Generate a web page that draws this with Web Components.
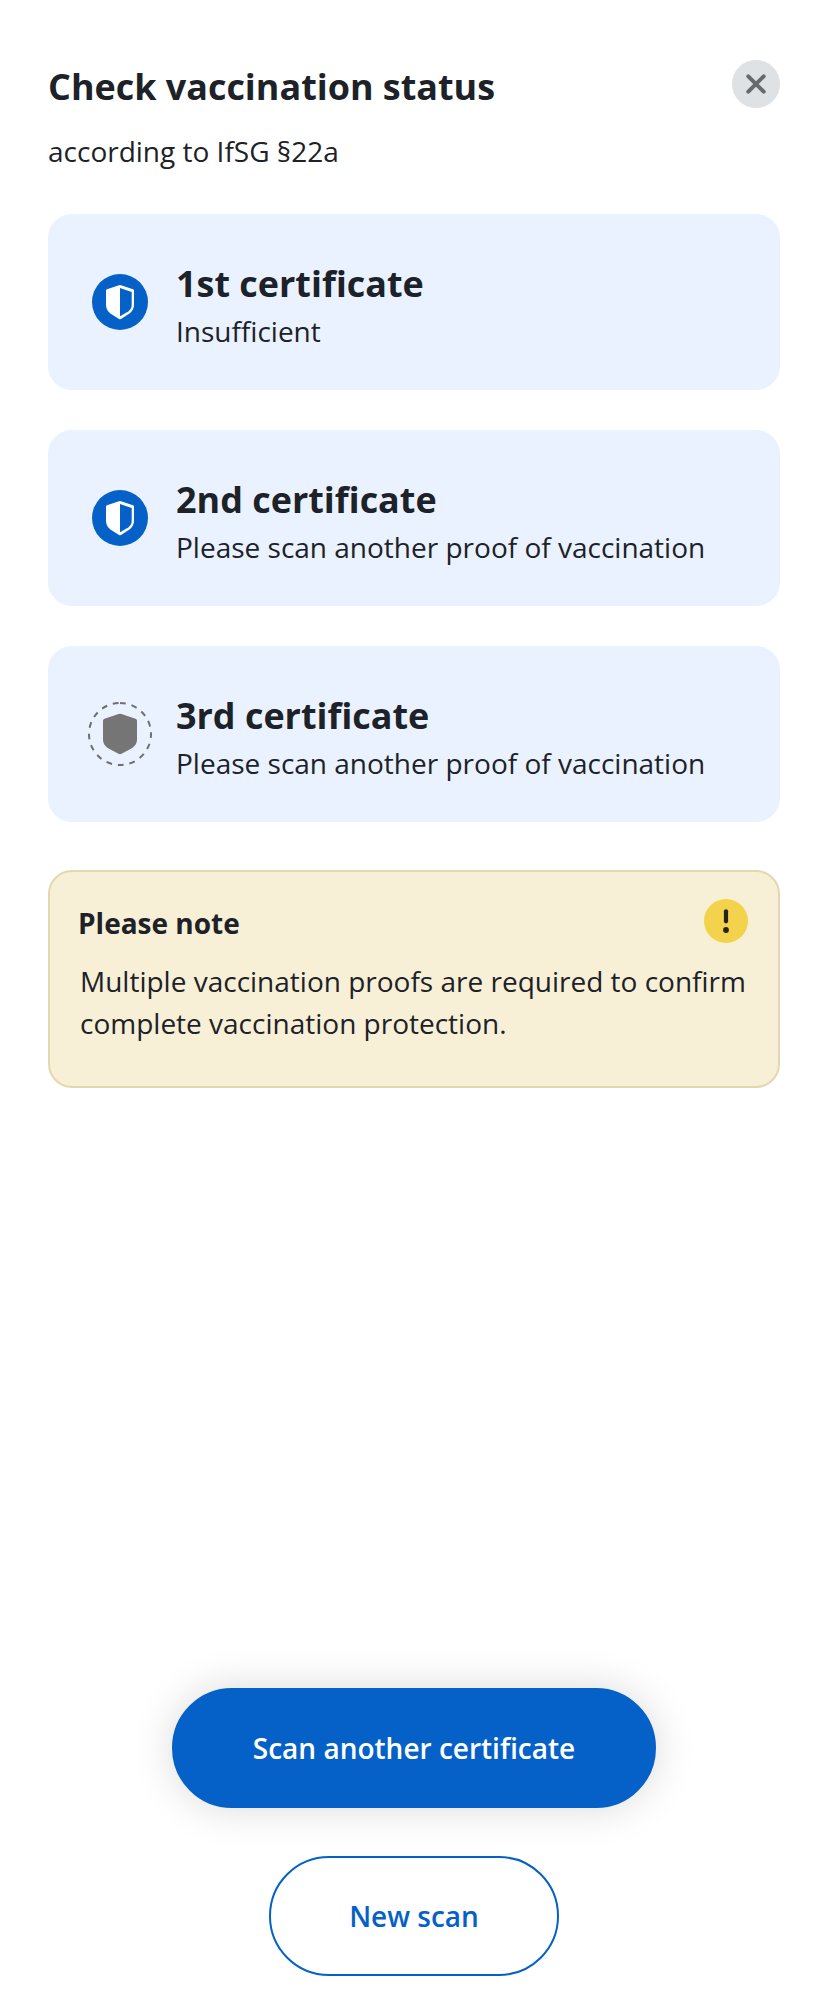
<!DOCTYPE html>
<html lang="en">
<head>
<meta charset="utf-8">
<title>Check vaccination status</title>
<style>
body{margin:0;background:#fff}
</style>
</head>
<body>
<vaccination-check></vaccination-check>
<script>
const shield = `<svg width="64" height="64" viewBox="0 0 64 64"><circle cx="32" cy="32" r="28" fill="#0561c7"/><path d="M31 15.200Q32 14.700 33 15.200L45 19.200Q46 19.600 46 20.600V34.500C46 39.500 43.500 42.300 40 44.600L33 48.900Q32 49.500 31 48.900L24 44.600C20.500 42.300 18 39.500 18 34.500V20.600Q18 19.600 19 19.200Z" fill="#fff"/><path d="M32 18L43.700 21.900V34.500C43.700 38.700 41.500 40.800 38.500 42.600L32 46.300Z" fill="#0561c7"/></svg>`;
const pending = `<svg width="64" height="64" viewBox="0 0 64 64"><circle cx="32" cy="32" r="31" fill="none" stroke="#6e706e" stroke-width="2" stroke-dasharray="5.800 5.900" transform="rotate(-90 32 32)"/><path d="M30.500 12Q32 11.400 33.500 12L47.500 16.700Q49 17.300 49 18.800V37.500C49 42 46.500 44.600 43 46.800L33.500 51.800Q32 52.500 30.500 51.800L21 46.800C17.500 44.600 15 42 15 37.500V18.800Q15 17.300 16.500 16.700Z" fill="#757575"/></svg>`;

function define(name, html) {
  const template = document.createElement('template');
  template.innerHTML = html;
  customElements.define(name, class extends HTMLElement {
    constructor() {
      super();
      this.attachShadow({mode: 'open'}).append(template.content.cloneNode(true));
      const icon = this.shadowRoot.querySelector('.icon');
      if (icon) icon.innerHTML = this.getAttribute('state') === 'pending' ? pending : shield;
    }
  });
}

define('sheet-header', `<style>
:host{display:block}
.row{display:flex;justify-content:space-between;align-items:flex-start;height:72px}
h1{margin:2px 0 0;font-size:35.930px;line-height:49px;font-weight:700;white-space:nowrap}
button{all:unset;width:48px;height:48px}
svg{display:block}
p{margin:0;font-size:28px;line-height:38px}
</style>
<div class="row"><h1><slot></slot></h1><button aria-label="Close"><svg width="48" height="48" viewBox="0 0 48 48"><circle cx="24" cy="24" r="24" fill="#dee2e5"/><path d="M16.300 16.300L31.700 31.700M31.700 16.300L16.300 31.700" stroke="#656b6b" stroke-width="4" stroke-linecap="round"/></svg></button></div>
<p><slot name="subtitle"></slot></p>`);

define('certificate-card', `<style>
:host{display:flex;box-sizing:border-box;height:176px;padding:45px 40px 0;border-radius:24px;background:#eaf2ff}
.icon{width:64px;height:64px;margin:11px 24px 0 0}
.icon svg{display:block;overflow:visible}
h2{margin:0;font-size:35.930px;line-height:49px;font-weight:700}
p{margin:4px 0 0;font-size:28px;line-height:38px}
</style>
<div class="icon"></div><div><h2><slot></slot></h2><p><slot name="detail"></slot></p></div>`);

define('note-box', `<style>
:host{display:block;box-sizing:border-box;height:218px;border:2px solid #e2d8b0;border-radius:24px;background:#f8f0d6;padding:27px 30px 0 28px}
.head{display:flex;justify-content:space-between}
h3{margin:5px 0 0;font-size:28px;line-height:38px}
p{margin:17px 0 0 2px;font-size:28px;line-height:42px;white-space:nowrap}
</style>
<div class="head"><h3><slot name="title"></slot></h3><svg width="44" height="44" viewBox="0 0 44 44"><circle cx="22" cy="22" r="22" fill="#f3d34b"/><path d="M22 12.300V22.300" stroke="#242219" stroke-width="4.200" stroke-linecap="round"/><circle cx="22" cy="31" r="2.900" fill="#242219"/></svg></div>
<p><slot></slot></p>`);

define('pill-button', `<style>
:host{display:block}
button{display:block;box-sizing:border-box;width:290px;height:120px;padding:0;border:2px solid #0561c7;border-radius:60px;background:#fff;color:#0561c7;font:600 28px/38px "Open Sans",sans-serif}
:host([primary]) button{width:484px;background:#0561c7;color:#fff;box-shadow:0 0 40px rgba(0,0,0,.15)}
</style><button><slot></slot></button>`);

define('vaccination-check', `<style>
:host{display:flex;flex-direction:column;box-sizing:border-box;height:2000px;padding:60px 48px 24px;font-family:"Open Sans",sans-serif;color:#1c2228}
sheet-header{height:154px}
.cards{display:flex;flex-direction:column;gap:40px;margin-bottom:48px}
.actions{margin-top:auto;display:flex;flex-direction:column;align-items:center;gap:48px}
</style>
<sheet-header>Check vaccination status<span slot="subtitle">according to IfSG §22a</span></sheet-header>
<div class="cards">
<certificate-card>1st certificate<span slot="detail">Insufficient</span></certificate-card>
<certificate-card>2nd certificate<span slot="detail">Please scan another proof of vaccination</span></certificate-card>
<certificate-card state="pending">3rd certificate<span slot="detail">Please scan another proof of vaccination</span></certificate-card>
</div>
<note-box><span slot="title">Please note</span>Multiple vaccination proofs are required to confirm<br>complete vaccination protection.</note-box>
<div class="actions"><pill-button primary>Scan another certificate</pill-button><pill-button>New scan</pill-button></div>`);
</script>
</body>
</html>
